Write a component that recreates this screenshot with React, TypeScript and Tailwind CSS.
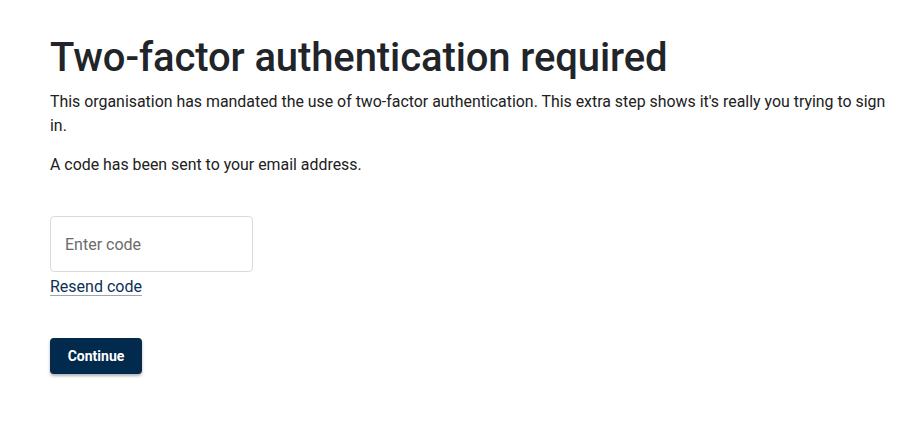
import React from 'react';

const App: React.FC = () => {
  return (
    <div className="min-h-screen bg-white text-[#212121]" style={{ fontFamily: 'Roboto, "Noto Sans", sans-serif' }}>
      <main className="pl-[50px] pr-[16px] pt-[34px]">
        <h1 className="text-[40px] leading-[48px] font-medium tracking-[-0.1px] text-[#212529]">
          Two-factor authentication required
        </h1>
        <p className="mt-[8px] max-w-[848px] text-[15.9px] leading-[24px]">
          This organisation has mandated the use of two-factor authentication. This extra step shows it's really you trying to sign in.
        </p>
        <p className="mt-[15px] text-[15.9px] leading-[24px]">A code has been sent to your email address.</p>

        <form className="mt-[39px] flex flex-col items-start" onSubmit={(e) => e.preventDefault()}>
          <input
            type="text"
            placeholder="Enter code"
            className="w-[203px] h-[56px] rounded-[4px] border border-[#dadada] px-[14px] text-[16px] placeholder:text-[#6b6b6b] outline-none"
          />
          <a
            href="#"
            className="mt-[4px] text-[16px] leading-[22px] text-[#0b3154] underline decoration-[#9aa6b2] underline-offset-[3px]"
          >
            Resend code
          </a>
          <button
            type="submit"
            className="mt-[40px] h-[36px] w-[92px] rounded-[4px] bg-[#022a4d] text-white text-[14px] font-bold shadow-[0_2px_3px_rgba(0,0,0,0.3)]"
          >
            Continue
          </button>
        </form>
      </main>
    </div>
  );
};

export default App;
